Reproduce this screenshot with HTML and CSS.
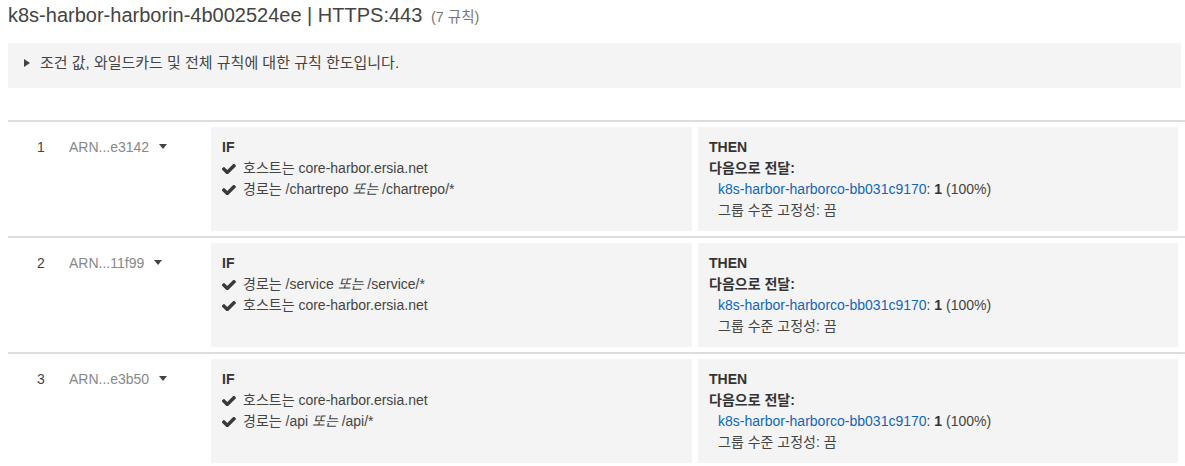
FILE: index.html
```html
<!DOCTYPE html>
<html lang="ko">
<head>
<meta charset="utf-8">
<title>Rules</title>
<link rel="stylesheet" href="styles.css">
</head>
<body>
<div class="page">
  <h1 class="title">k8s-harbor-harborin-4b002524ee | HTTPS:443 <span class="count">(7 규칙)</span></h1>
  <div class="info">
    <span class="tri"></span>
    <span>조건 값, 와일드카드 및 전체 규칙에 대한 규칙 한도입니다.</span>
  </div>
  <div class="rules">
    <div class="rule">
      <div class="num">1</div>
      <div class="arn">ARN...e3142 <span class="caret"></span></div>
      <div class="box">
        <div class="head">IF</div>
        <div class="cond"><svg class="chk" viewBox="141 380 1530 1060"><path d="M1671 566q0 40-28 68l-724 724-136 136q-28 28-68 28t-68-28l-136-136-362-362q-28-28-28-68t28-68l136-136q28-28 68-28t68 28l294 295 656-657q28-28 68-28t68 28l136 136q28 28 28 68z"/></svg><span>호스트는 core-harbor.ersia.net</span></div>
        <div class="cond"><svg class="chk" viewBox="141 380 1530 1060"><path d="M1671 566q0 40-28 68l-724 724-136 136q-28 28-68 28t-68-28l-136-136-362-362q-28-28-28-68t28-68l136-136q28-28 68-28t68 28l294 295 656-657q28-28 68-28t68 28l136 136q28 28 28 68z"/></svg><span>경로는 /chartrepo <i class="or">또는</i> /chartrepo/*</span></div>
      </div>
      <div class="box then">
        <div class="head">THEN</div>
        <div class="fwd">다음으로 전달:</div>
        <div class="sub"><a class="link">k8s-harbor-harborco-bb031c9170</a>: <b>1</b> (100%)</div>
        <div class="sub">그룹 수준 고정성: 끔</div>
      </div>
    </div>
    <div class="rule">
      <div class="num">2</div>
      <div class="arn">ARN...11f99 <span class="caret"></span></div>
      <div class="box">
        <div class="head">IF</div>
        <div class="cond"><svg class="chk" viewBox="141 380 1530 1060"><path d="M1671 566q0 40-28 68l-724 724-136 136q-28 28-68 28t-68-28l-136-136-362-362q-28-28-28-68t28-68l136-136q28-28 68-28t68 28l294 295 656-657q28-28 68-28t68 28l136 136q28 28 28 68z"/></svg><span>경로는 /service <i class="or">또는</i> /service/*</span></div>
        <div class="cond"><svg class="chk" viewBox="141 380 1530 1060"><path d="M1671 566q0 40-28 68l-724 724-136 136q-28 28-68 28t-68-28l-136-136-362-362q-28-28-28-68t28-68l136-136q28-28 68-28t68 28l294 295 656-657q28-28 68-28t68 28l136 136q28 28 28 68z"/></svg><span>호스트는 core-harbor.ersia.net</span></div>
      </div>
      <div class="box then">
        <div class="head">THEN</div>
        <div class="fwd">다음으로 전달:</div>
        <div class="sub"><a class="link">k8s-harbor-harborco-bb031c9170</a>: <b>1</b> (100%)</div>
        <div class="sub">그룹 수준 고정성: 끔</div>
      </div>
    </div>
    <div class="rule">
      <div class="num">3</div>
      <div class="arn">ARN...e3b50 <span class="caret"></span></div>
      <div class="box">
        <div class="head">IF</div>
        <div class="cond"><svg class="chk" viewBox="141 380 1530 1060"><path d="M1671 566q0 40-28 68l-724 724-136 136q-28 28-68 28t-68-28l-136-136-362-362q-28-28-28-68t28-68l136-136q28-28 68-28t68 28l294 295 656-657q28-28 68-28t68 28l136 136q28 28 28 68z"/></svg><span>호스트는 core-harbor.ersia.net</span></div>
        <div class="cond"><svg class="chk" viewBox="141 380 1530 1060"><path d="M1671 566q0 40-28 68l-724 724-136 136q-28 28-68 28t-68-28l-136-136-362-362q-28-28-28-68t28-68l136-136q28-28 68-28t68 28l294 295 656-657q28-28 68-28t68 28l136 136q28 28 28 68z"/></svg><span>경로는 /api <i class="or">또는</i> /api/*</span></div>
      </div>
      <div class="box then">
        <div class="head">THEN</div>
        <div class="fwd">다음으로 전달:</div>
        <div class="sub"><a class="link">k8s-harbor-harborco-bb031c9170</a>: <b>1</b> (100%)</div>
        <div class="sub">그룹 수준 고정성: 끔</div>
      </div>
    </div>
  </div>
</div>
</body>
</html>
```

FILE: styles.css
```css
html, body {
  margin: 0;
  padding: 0;
  background: #fff;
}
body {
  font-family: "Liberation Sans", "Noto Sans CJK KR", sans-serif;
  font-size: 14px;
  color: #444;
  overflow: hidden;
}
.page {
  padding: 3px 0 0 8px;
}
.title {
  margin: 0;
  font-size: 20px;
  font-weight: normal;
  line-height: 24px;
  color: #444;
  white-space: nowrap;
}
.count {
  font-size: 14.5px;
  color: #777;
  margin-left: 3px;
}
.info {
  margin-top: 14px;
  margin-right: 4px;
  background: #f4f4f4;
  height: 45px;
  box-sizing: border-box;
  padding: 9px 16px 0 16px;
  line-height: 21px;
  font-size: 15px;
  display: flex;
  align-items: flex-start;
}
.info .tri {
  width: 0;
  height: 0;
  border-top: 4px solid transparent;
  border-bottom: 4px solid transparent;
  border-left: 6px solid #444;
  margin: 7px 10px 0 0;
}
.rules {
  margin-top: 32px;
}
.rule {
  display: grid;
  grid-template-columns: 61px 142px 481px 486px;
  border-top: 2px solid #ddd;
  padding: 5px 0;
}
.rule .then {
  margin-left: 6px;
}
.num {
  padding: 10px 0 0 29px;
  line-height: 21px;
}
.arn {
  padding-top: 10px;
  line-height: 21px;
  color: #888;
  white-space: nowrap;
}
.caret {
  display: inline-block;
  width: 0;
  height: 0;
  border-left: 4px solid transparent;
  border-right: 4px solid transparent;
  border-top: 5px solid #444;
  margin-left: 6px;
  vertical-align: 3px;
}
.box {
  background: #f4f4f4;
  height: 104px;
  box-sizing: border-box;
  padding: 10px 11px;
  line-height: 21px;
}
.head {
  font-weight: bold;
  color: #333;
}
.cond {
  display: flex;
  align-items: center;
  white-space: nowrap;
}
.chk {
  width: 14px;
  height: 10px;
  fill: #3a3a3a;
  margin: 1px 7px 0 0;
  flex: none;
}
.or {
  font-style: italic;
}
.fwd {
  font-weight: bold;
  color: #333;
}
.sub {
  padding-left: 9px;
  white-space: nowrap;
}
.link {
  color: #1166bb;
  text-decoration: none;
}
.sub b {
  color: #333;
}
```
